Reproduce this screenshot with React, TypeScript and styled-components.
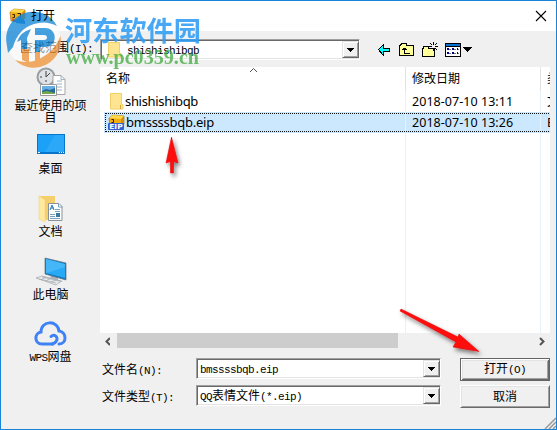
import React from "react";
import styled, { createGlobalStyle } from "styled-components";

const Global = createGlobalStyle`
  * { box-sizing: border-box; }
  body { margin: 0; background: #f0f0f0; overflow: hidden; }
  svg { display: block; flex: none; }
`;

const Dialog = styled.div`
  position: relative;
  width: 557px;
  height: 430px;
  border: 1px solid #1883d7;
  background: #f0f0f0;
  color: #000;
  font: 12px/16px "Noto Sans CJK SC", sans-serif;
  display: flex;
  flex-direction: column;
  overflow: hidden;
  white-space: nowrap;
`;
const TitleBar = styled.header`
  height: 30px;
  flex: none;
  background: #fff;
  display: flex;
  align-items: center;
  padding: 0 9px 0 8px;
`;
const Title = styled.span`
  flex: 1;
  margin: -2px 0 0 5px;
  position: relative;
  z-index: 2;
`;
const Toolbar = styled.div`
  height: 36px;
  flex: none;
  display: flex;
  align-items: flex-start;
  padding-top: 8px;
`;
const LookIn = styled.label`
  width: 99px;
  padding: 0 0 0 20px;
`;
const Mono = styled.span`
  font-family: "Liberation Mono", monospace;
  font-size: 11px;
  letter-spacing: -0.6px;
`;
const ToolIcons = styled.div`
  display: flex;
  padding: 2px 0 0 17px;
`;
const Body = styled.div`
  display: flex;
  flex: 1;
`;
const Places = styled.nav`
  width: 99px;
  flex: none;
`;
const Place = styled.div<{ $h: number }>`
  height: ${(p) => p.$h}px;
  display: flex;
  flex-direction: column;
  align-items: center;
  text-align: center;
  line-height: 12px;
`;
const PlaceLabel = styled.div<{ $gap: number }>`
  width: 80px;
  margin-top: ${(p) => p.$gap}px;
  white-space: pre-line;
`;
const Main = styled.main`
  width: 450px;
`;
const FileList = styled.section`
  height: 266px;
  background: #fff;
  position: relative;
  font-family: "Noto Sans", "Noto Sans CJK SC", sans-serif;
  overflow: hidden;
`;
const Grid = styled.div`
  display: grid;
  grid-template-columns: 302px 135px 9px;
  margin-left: 4px;
`;
const HeaderRow = styled(Grid)`
  height: 24px;
  font-family: "Noto Sans CJK SC", sans-serif;
`;
const HeadCell = styled.div<{ $last?: boolean }>`
  border-right: ${(p) => (p.$last ? "0" : "1px solid #e2e2e2")};
  padding: 3px 0 0 6px;
  overflow: hidden;
  &:first-child { padding-left: 2px; }
`;
const FileRow = styled(Grid)<{ $selected?: boolean }>`
  height: 21px;
  background: ${(p) => (p.$selected ? "#cce8ff" : "#fff")};
  outline: ${(p) => (p.$selected ? "1px dotted #111" : "0")};
  outline-offset: -2px;
  margin-right: -4px;
`;
const Cell = styled.div<{ $last?: boolean }>`
  display: flex;
  align-items: center;
  overflow: hidden;
  padding-left: 6px;
  font-size: 12.5px;
  letter-spacing: 0.04px;
  border-right: ${(p) => (p.$last ? "0" : "1px solid #e5f1fb")};
  &:first-child { padding-left: 4px; }
`;
const FileName = styled.span<{ $tight: number }>`
  font-size: 13px;
  letter-spacing: ${(p) => p.$tight}px;
  margin: -1px 0 0 1px;
`;
const Filler = styled(Grid)`
  height: 200px;
`;
const SortMark = styled.svg`
  position: absolute;
  left: 149px;
  top: 0;
`;
const ScrollBar = styled.div`
  height: 16px;
  display: flex;
  align-items: center;
  justify-content: space-between;
  padding-right: 3px;
`;
const Thumb = styled.div`
  width: 281px;
  height: 15px;
  margin: 0 auto 1px 7px;
  background: #cdcdcd;
`;
const Form = styled.div`
  display: grid;
  grid-template-columns: 96px 245px 19px 90px;
  grid-template-rows: 27px 25px;
  padding-top: 9px;
`;
const Label = styled.label`
  padding: 3px 0 0 2px;
`;
const Combo = styled.div<{ $w: number }>`
  width: ${(p) => p.$w}px;
  height: 21px;
  display: flex;
  align-items: center;
  background: #fff;
  border: 1px solid;
  border-color: #a0a0a0 #fff #fff #a0a0a0;
  box-shadow: inset 1px 1px #696969, inset -1px -1px #e3e3e3;
  padding: 2px 0 2px 3px;
`;
const ComboValue = styled.span`
  flex: 1;
  line-height: 16px;
`;
const DropButton = styled.div`
  width: 17px;
  height: 17px;
  background: #f0f0f0;
  border: 1px solid;
  border-color: #e3e3e3 #696969 #696969 #e3e3e3;
  box-shadow: inset 1px 1px #fff, inset -1px -1px #a0a0a0;
  display: flex;
  align-items: center;
  justify-content: center;
`;
const Button = styled.button<{ $primary?: boolean }>`
  width: 90px;
  height: 23px;
  padding: 0 0 2px;
  font: inherit;
  color: #000;
  background: #f0f0f0;
  border: 1px solid;
  border-color: ${(p) => (p.$primary ? "#646464" : "#fff #696969 #696969 #fff")};
  box-shadow: ${(p) =>
    p.$primary
      ? "inset 1px 1px #fff, inset -1px -1px #696969, inset 2px 2px #e3e3e3, inset -2px -2px #a0a0a0"
      : "inset 1px 1px #e3e3e3, inset -1px -1px #a0a0a0"};
`;
const Overlay = styled.svg`
  position: absolute;
  left: -1px;
  top: -1px;
  pointer-events: none;
`;

const Down = () => (
  <svg width="7" height="4" shapeRendering="crispEdges"><path d="M0 0h7v1H0zM1 1h5v1H1zM2 2h3v1H2zM3 3h1v1H3z" /></svg>
);

const PackIcon = ({ tagged }: { tagged?: boolean }) => (
  <svg width="17" height="17" viewBox="0 0 17 17">
    <path d="M1 4 5 1l11 1v8l-4 4-10-1z" fill="#f2ae12" stroke="#9a6207" strokeWidth=".6" />
    <path d="m1 4 4-3 11 1-3 3z" fill="#ffd84c" />
    <path d="m13 5 3-3v8l-3 3z" fill="#d88b08" />
    <path d={tagged ? "M3.500 5.500h2v3h-2" : "M3.500 6.500h2v3h-2M8.500 5.500h3v4h-2"} fill="none" stroke="#3a2105" />
    {tagged ? (
      <>
        <rect y="9" width="16" height="7" rx="1" fill="#2f5fd0" />
        <text x="1.2" y="15.2" fontFamily="DejaVu Sans" fontWeight="bold" fontSize="7" textLength="13.5" lengthAdjust="spacingAndGlyphs" fill="#fff">EIP</text>
      </>
    ) : (
      <>
        <path d="M3 10q4 4 7-1l-1 5H4z" fill="#db3a22" />
        <path d="M7 15v-3l4-3 5 4v3z" fill="#2780d4" />
      </>
    )}
  </svg>
);

const Folder = () => (
  <svg width="16" height="17" viewBox="-2 0 16 17">
    <path d="M.5.5h11v11H13v4.500H.5z" fill="#ffe591" stroke="#f1cf69" />
    <path d="M10.500 12v4" stroke="#d9aa36" />
  </svg>
);

const RecentIcon = () => (
  <svg width="30" height="30" viewBox="0 0 30 30">
    <circle cx="10" cy="10" r="8.5" fill="#dfe3e5" stroke="#979da0" strokeWidth="2" />
    <path d="M10 4v6l4-4M4 10h2m4 5v-2" stroke="#444" fill="none" />
    <path d="M17 8.500h8l4 4v15H17z" fill="#fff" stroke="#a5a5a5" />
    <path d="M25 8.500v4h4M21 14h5m-5 3h5m-5 3h5m-5 3h5" stroke="#9cb4c4" fill="none" />
    <path d="M4.500 17.500h16v11h-16z" fill="#fff" stroke="#999" />
    <path d="M6 19h13v8H6z" fill="#67aee1" />
    <path d="m6 24 4-2 4 1 5-2v6H6z" fill="#24699b" /><path d="m6 25 5-1 8 2v1H6z" fill="#75a64b" />
  </svg>
);
const DesktopIcon = () => (
  <svg width="28" height="20" viewBox="0 0 28 20">
    <path fill="#0875cc" d="M0 0h28v20H0z" /><path fill="#1ba1f7" d="M1 1h26v17H1z" />
    <path d="M18 1h9v17H8z" fill="#38aef8" opacity=".55" />
    <path d="M1 18.500h2m19 0h1m1 0h1m1 0h1" stroke="#fff" />
  </svg>
);
const DocsIcon = () => (
  <svg width="26" height="28" viewBox="0 0 26 28">
    <path d="M1 1h16v24H6z" fill="#f5cf6b" /><path d="m1 1 6 4v22l-6-3z" fill="#ffe99e" stroke="#f3cf75" strokeWidth=".5" />
    <path d="M10.500 8.500H21l3 3v14H10.500z" fill="#fff" stroke="#899197" />
    <path d="M20.500 8v4h4M17 14.500h5m-5 2h5m-10 3h5m-5 2h5m-5 2h10" stroke="#7aa1bd" fill="none" />
    <path d="m12 15 2-5 2 5m-3-2h3" stroke="#207bbf" fill="none" /><path d="M18 18h4v4h-4z" fill="#397aa0" />
  </svg>
);
const PcIcon = () => (
  <svg width="32" height="29" viewBox="0 0 32 29">
    <path d="m16 17 7 2v4l5 1-4 2-9-3z" fill="#adb7bd" />
    <path d="m10 1 21 5v17l-21-6z" fill="#0b79c2" stroke="#64717a" strokeWidth=".7" />
    <path d="m11 2 19 5v14l-19-5z" fill="#28a9f5" /><path d="m11 2 19 5v3L12 16h-1z" fill="#59c1fb" opacity=".6" />
    <path d="m1 21 6-2 19 5-5 4z" fill="#e8ebed" stroke="#9ca4a9" strokeWidth=".7" />
    <path d="m4 22 17 4M7 20l17 4M6 23l5-3m0 4 5-3m0 4 5-2" stroke="#a2a8ac" strokeWidth=".7" />
  </svg>
);
const CloudIcon = () => (
  <svg width="33" height="25" viewBox="0 0 33 25" fill="none" stroke="#3f82f5" strokeWidth="3" strokeLinecap="round">
    <path d="M19 23H8C0 23 0 12 7 11 7-1 24-1 25 10c8 1 8 13 0 13" />
    <path d="M17 15.500c4-4 8 2 5 5q-1 2-4 2.500" />
  </svg>
);

const ToolbarGlyphs = () => (
  <svg width="98" height="20" shapeRendering="crispEdges">
    <path d="M1.500 9.500 6 5v3h6v3H6v4z" transform="translate(0 -1)" fill="#00ffff" stroke="#000" />
    <g transform="translate(22 1)">
      <path d="M.5 3.500h1v-1h1v-1h5v2h7v10H.5z" fill="#ffff9c" stroke="#000" />
      <path d="M5.500 6v5H11M3 7.500h5M4 6.500h3" stroke="#000" fill="none" />
    </g>
    <g transform="translate(45 1)">
      <path d="M.5 6.500h1v-2h5v2h6v8H.5z" fill="#ffff9c" stroke="#000" />
      <path d="M11 0h1v3h-1zm0 6h1v3h-1zM7 4h3v1H7zm6 0h3v1h-3zM9 2h1v1H9zM8 1h1v1H8zm5 1h1v1h-1zm1-1h1v1h-1zM9 6h1v1H9zm4 0h1v1h-1zm1 1h1v1h-1z" fill="#000" />
    </g>
    <g transform="translate(68 2)">
      <path d="M.5.500h15v13H.5z" fill="#fff" stroke="#000" />
      <path d="M1 1h14v2H1z" fill="#0873d3" />
      <path d="M0 3.500h16" stroke="#000" />
      <path d="M2 5h2v2H2zm5 0h2v2H7zm5 0h1v2h-1zM2 9h2v2H2zm5 0h2v2H7zm5 0h1v2h-1z" fill="#000080" />
      <path d="M4 6.500h2m3 0h2m2 0h1M4 10.500h2m3 0h2m2 0h1" stroke="#777" />
    </g>
    <path d="M86 6h9v1h-1v1h-1v1h-1v1h-1v1h-1v-1h-1V9h-1V8h-1V7h-1z" />
  </svg>
);

const Watermark = () => (
  <Overlay width="210" height="75">
    <g opacity=".78">
      <circle cx="33.5" cy="40" r="27" fill="#fff" opacity=".75" />
      <path d="M6.500 43A27 27 0 0 1 57 26Q46 20 34 24 18 29 13 47l-5 6z" fill="#1689d8" />
      <path d="M60.500 36A27 27 0 0 1 15 60q14 5 26-2 14-7 19.500-22z" fill="#ef963c" />
      <path d="M17 42q3-10 14-13l-4 9v15h-6V40z" fill="#1689d8" />
      <path d="M35 28h10c13 0 13 19 0 19h-5v9l-5 2V40h9c4 0 4-5 0-5h-9z" fill="#1689d8" />
      <path d="M22 49h7v14l-7-3zM35 52h5v8l-5 2z" fill="#ef963c" />
    </g>
    <text x="65" y="40.500" fontFamily="Noto Sans CJK SC" fontSize="27" fontWeight="bold" textLength="136" lengthAdjust="spacingAndGlyphs" fill="#2f9df4" opacity=".88">河东软件园</text>
    <text x="66" y="63.500" fontFamily="Liberation Serif" fontSize="20" fontWeight="bold" textLength="133" lengthAdjust="spacingAndGlyphs" fill="#43ad43" opacity=".77">www.pc0359.cn</text>
  </Overlay>
);

const places = [
  { name: "最近使用的项\n目", icon: <RecentIcon />, h: 67, gap: 2 },
  { name: "桌面", icon: <DesktopIcon />, h: 61, gap: 8 },
  { name: "文档", icon: <DocsIcon />, h: 62, gap: 2 },
  { name: "此电脑", icon: <PcIcon />, h: 64, gap: 2 },
  { name: "网盘", latin: "WPS", icon: <CloudIcon />, h: 50, gap: 4 },
];

const files = [
  { name: "shishishibqb", date: "2018-07-10 13:11", type: "文件夹", tight: -0.32 },
  { name: "bmssssbqb.eip", date: "2018-07-10 13:26", type: "EIP", tight: -0.25, selected: true },
];

export default function App() {
  return (
    <Dialog>
      <Global />
      <TitleBar>
        <PackIcon />
        <Title>打开</Title>
        <svg width="12" height="12"><path d="m1 1 10 10M11 1 1 11" stroke="#000" strokeWidth="1.1" /></svg>
      </TitleBar>
      <Toolbar>
        <LookIn>查找范围<Mono>(I):</Mono></LookIn>
        <Combo $w={260}>
          <svg width="23" height="17" viewBox="-1 0 23 17"><path d="M3.500 1.500h11v11H16V16H3.500z" fill="#ffe591" stroke="#f1cf69" /></svg>
          <ComboValue><Mono>shishishibqb</Mono></ComboValue>
          <DropButton><Down /></DropButton>
        </Combo>
        <ToolIcons><ToolbarGlyphs /></ToolIcons>
      </Toolbar>
      <Body>
        <Places>
          {places.map((p) => (
            <Place key={p.name} $h={p.h}>
              {p.icon}
              <PlaceLabel $gap={p.gap}>{p.latin && <Mono>{p.latin}</Mono>}{p.name}</PlaceLabel>
            </Place>
          ))}
        </Places>
        <Main>
          <FileList>
            <HeaderRow>
              <HeadCell>名称</HeadCell>
              <HeadCell>修改日期</HeadCell>
              <HeadCell $last>类型</HeadCell>
            </HeaderRow>
            <SortMark width="9" height="6"><path d="m1 5 3.500-3.500L8 5" fill="none" stroke="#555" /></SortMark>
            {files.map((f) => (
              <FileRow key={f.name} $selected={f.selected}>
                <Cell>
                  {f.selected ? <PackIcon tagged /> : <Folder />}
                  <FileName $tight={f.tight}>{f.name}</FileName>
                </Cell>
                <Cell>{f.date}</Cell>
                <Cell $last>{f.type}</Cell>
              </FileRow>
            ))}
            <Filler><Cell /><Cell /><Cell $last /></Filler>
          </FileList>
          <ScrollBar>
            <svg width="10" height="9"><path d="M10 1 6.500 4.500 10 8" fill="none" stroke="#555" strokeWidth="2" /></svg>
            <Thumb />
            <svg width="10" height="9"><path d="m3 1 3.500 3.500L3 8" fill="none" stroke="#555" strokeWidth="2" /></svg>
          </ScrollBar>
          <Form>
            <Label>文件名<Mono>(N):</Mono></Label>
            <Combo $w={245}><ComboValue><Mono>bmssssbqb.eip</Mono></ComboValue><DropButton><Down /></DropButton></Combo>
            <span />
            <Button $primary>打开<Mono>(O)</Mono></Button>
            <Label>文件类型<Mono>(T):</Mono></Label>
            <Combo $w={245}><ComboValue><Mono>QQ</Mono>表情文件<Mono>(*.eip)</Mono></ComboValue><DropButton><Down /></DropButton></Combo>
            <span />
            <Button>取消</Button>
          </Form>
        </Main>
      </Body>
      <Overlay width="557" height="430">
        <defs>
          <filter id="shade" x="-30%" y="-30%" width="170%" height="170%"><feDropShadow dx="2" dy="3" stdDeviation="2" floodOpacity=".5" /></filter>
        </defs>
        <g fill="#fe0d0d" stroke="#d00" strokeWidth=".5" filter="url(#shade)">
          <path d="m171.500 137 6.500 26-4.500-1.500V173h-3v-11.500L166 163z" />
          <path d="m401 309 57 28 1-3 20 17.500-26-4.500 3-5-56-31z" />
        </g>
        <path d="m545 429 11-11m-7 11 7-7m-3 7 3-3" stroke="#999" strokeWidth="1.5" />
      </Overlay>
      <Watermark />
    </Dialog>
  );
}
